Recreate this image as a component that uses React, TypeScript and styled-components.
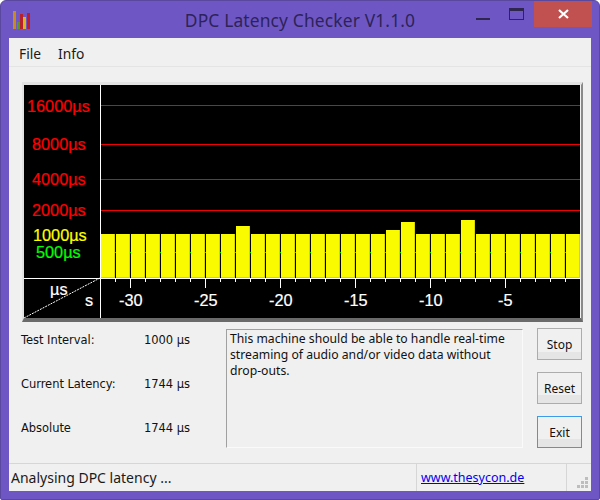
import React from 'react';
import styled, { createGlobalStyle } from 'styled-components';

const Global = createGlobalStyle`
  html, body { margin: 0; padding: 0; background: #fff; }
  #root { width: 600px; height: 500px; overflow: hidden; }
`;

const Win = styled.div`
  width: 600px; height: 500px; box-sizing: border-box;
  background: #6e57c4;
  border: 1px solid #5a489f;
  border-radius: 6px 6px 2px 2px;
  display: flex; flex-direction: column;
  padding: 0 8px 8px 8px;
`;
const TitleBar = styled.div`
  height: 37px; flex: none; position: relative;
  display: flex; align-items: center; justify-content: center;
`;
const Title = styled.div`
  font: 17.4px "Noto Sans", "Open Sans", sans-serif;
  color: #2d2358;
  letter-spacing: 0.15px;
`;
const AppIcon = styled.svg`
  position: absolute; left: 4px; top: 10px;
`;
const WinControls = styled.div`
  position: absolute; right: -1px; top: 0; display: flex; align-items: flex-start;
`;
const Ctl = styled.div<{ $w: number; $low?: boolean }>`
  width: ${p => p.$w}px; height: 26px; display: flex; justify-content: center;
  align-items: ${p => (p.$low ? 'flex-end' : 'center')};
  box-sizing: border-box; padding-bottom: ${p => (p.$low ? '7px' : '0')};
`;
const CloseBtn = styled(Ctl)`
  background: #c15151;
`;
const Client = styled.div`
  flex: 1; background: #f0f0f0; display: flex; flex-direction: column; min-height: 0;
`;
const MenuBar = styled.div`
  height: 29px; flex: none; box-sizing: border-box;
  border-bottom: 1px solid #e4e4e4;
  display: flex; align-items: center; gap: 17px; padding: 3px 0 0 10px;
  font: 13.8px "Noto Sans", "Open Sans", sans-serif; color: #1a1a1a;
`;
const ChartFrame = styled.div`
  margin: 15px 8px 0 13px; height: 240px; box-sizing: border-box;
  border-style: solid; border-width: 3px 2px 4px 2px;
  border-color: #e3e3e3 #8a8a8a #6a6a6a #e3e3e3;
  flex: none;
`;
const ChartSvg = styled.svg`
  display: block; width: 556px; height: 233px;
`;
const Lower = styled.div`
  flex: 1; display: flex; min-height: 0; padding: 7px 9px 0 12px;
`;
const Stats = styled.div`
  width: 205px; flex: none; display: flex; flex-direction: column; gap: 30px; padding-top: 4px;
`;
const StatRow = styled.div`
  display: grid; grid-template-columns: 123px 1fr; height: 14px; line-height: 14px;
  font: 11.5px "DejaVu Sans", sans-serif; color: #111;
  letter-spacing: -0.05px;
`;
const Message = styled.div`
  width: 297px; height: 119px; flex: none; box-sizing: border-box;
  border-style: solid; border-width: 1px; border-color: #a0a0a0 #fafafa #fafafa #a0a0a0;
  padding: 1px 3px;
  font: 12.2px/16px "Noto Sans", "Open Sans", sans-serif; color: #111;
`;
const Buttons = styled.div`
  margin-left: auto; display: flex; flex-direction: column; gap: 12px; margin-top: -1px;
`;
const Btn = styled.div<{ $focus?: boolean }>`
  width: 45px; height: 32px; box-sizing: border-box;
  border: 1px solid ${p => (p.$focus ? '#3c9ce8' : '#acacac')};
  background: linear-gradient(#f0f0f0 0, #f0f0f0 75%, #e5e5e5 75%);
  display: flex; align-items: center; justify-content: center;
  font: 12px "Noto Sans", "Open Sans", sans-serif; color: #111;
`;
const Status = styled.div`
  height: 28px; flex: none; box-sizing: border-box; border-top: 1px solid #d6d6d6;
  display: flex; align-items: center; position: relative;
  font: 14px "Noto Sans", "Open Sans", sans-serif; color: #1a1a1a;
`;
const StatusMain = styled.div`
  width: 408px; height: 100%; flex: none; box-sizing: border-box; padding-left: 2px;
  border-right: 1px solid #d6d6d6; display: flex; align-items: center;
`;
const StatusLink = styled.a`
  width: 150px; height: 100%; flex: none; box-sizing: border-box; padding-left: 4px;
  border-right: 1px solid #d6d6d6;
  display: flex; align-items: center; color: #0000ee; text-decoration: underline;
  font-size: 12.5px;
`;
const Grip = styled.svg`
  position: absolute; right: 2px; bottom: 2px;
`;

const tall: Record<number, number> = { 9: 226, 19: 230, 20: 222, 24: 220 };
const bars = Array.from({ length: 32 }, (_, i) => ({ top: tall[i] ?? 234 }));
const OX = 24, OY = 85;

const Label = ({ x, y, c, t, s = 16.3 }: { x: number; y: number; c: string; t: string; s?: number }) => (
  <text x={x - OX} y={y - OY} fill={c} stroke={c} strokeWidth="0.2" fontSize={s} fontFamily='"Liberation Sans", sans-serif'>{t}</text>
);

const Chart = () => (
  <ChartSvg viewBox="0 0 556 233" shapeRendering="crispEdges">
    <rect width="556" height="233" fill="#000" />
    {[105, 144, 179, 210].map(y => (
      <rect key={y} x="76" y={y - OY} width="480" height="1" fill="#f00000" />
    ))}
    {bars.map((b, i) => {
      const x = 101 + i * 15 - OX;
      const w = 14;
      return (
        <g key={i}>
          <rect x={x} y={b.top - OY} width={w} height={278 - b.top} fill="#fbfb00" />
          <rect x={x + w - 1} y={b.top - OY} width="1" height={278 - b.top} fill="#d8d800" />
          <rect x={x} y={277 - OY} width={w} height="1" fill="#d8d800" />
          <rect x={x + w} y={252 - OY} width="1" height="1" fill="#00e000" />
        </g>
      );
    })}
    <rect x="0" y={278 - OY} width="556" height="1" fill="#fff" />
    <rect x="76" y="0" width="1" height="233" fill="#fff" />
    {Array.from({ length: 32 }, (_, i) => {
      const x = 115 + i * 15 - OX;
      const long = (115 + i * 15 - 130) % 75 === 0;
      return <rect key={i} x={x} y={278 - OY} width="1" height={long ? 10 : 4} fill="#fff" />;
    })}
    <line x1="0" y1="233" x2="76" y2="193" stroke="#fff" strokeDasharray="2 1" shapeRendering="auto" />
    <Label x={27} y={112} c="#ff0000" t="16000µs" />
    <Label x={32} y={150} c="#ff0000" t="8000µs" />
    <Label x={32} y={185} c="#ff0000" t="4000µs" />
    <Label x={32} y={216} c="#ff0000" t="2000µs" />
    <Label x={33} y={241} c="#ffff00" t="1000µs" />
    <Label x={36} y={258} c="#00ff00" t="500µs" />
    <Label x={50} y={295} c="#fff" t="µs" />
    <Label x={85} y={306} c="#fff" t="s" />
    <Label x={119} y={306} c="#fff" t="-30" />
    <Label x={194} y={306} c="#fff" t="-25" />
    <Label x={269} y={306} c="#fff" t="-20" />
    <Label x={344} y={306} c="#fff" t="-15" />
    <Label x={419} y={306} c="#fff" t="-10" />
    <Label x={498} y={306} c="#fff" t="-5" />
  </ChartSvg>
);

export default function App() {
  return (
    <>
      <Global />
      <Win>
        <TitleBar>
          <AppIcon width="18" height="20" viewBox="0 0 18 20">
            <rect x="0" y="0" width="3" height="18" fill="#c98a1e" />
            <rect x="4" y="11" width="3" height="7" fill="#4f9a2a" />
            <rect x="7" y="3" width="3" height="15" fill="#b8202a" />
            <rect x="10" y="6" width="3" height="12" fill="#d8b820" />
            <rect x="14" y="2" width="3" height="16" fill="#c01c28" />
          </AppIcon>
          <Title>DPC Latency Checker V1.1.0</Title>
          <WinControls>
            <Ctl $w={46} $low>
              <svg width="14" height="2"><rect width="14" height="2" fill="#2f2650" /></svg>
            </Ctl>
            <Ctl $w={21}>
              <svg width="15" height="12"><rect x=".5" y=".5" width="14" height="11" fill="none" stroke="#2f2650" /><rect width="15" height="3" fill="#2f2650" /></svg>
            </Ctl>
            <Ctl $w={7} />
            <CloseBtn $w={58}>
              <svg width="11" height="10"><path d="M1 1 L10 9 M10 1 L1 9" stroke="#fff" strokeWidth="2.2" /></svg>
            </CloseBtn>
          </WinControls>
        </TitleBar>
        <Client>
          <MenuBar><span>File</span><span>Info</span></MenuBar>
          <ChartFrame><Chart /></ChartFrame>
          <Lower>
            <Stats>
              <StatRow><span>Test Interval:</span><span>1000 µs</span></StatRow>
              <StatRow><span>Current Latency:</span><span>1744 µs</span></StatRow>
              <StatRow><span>Absolute</span><span>1744 µs</span></StatRow>
            </Stats>
            <Message>This machine should be able to handle real-time streaming of audio and/or video data without drop-outs.</Message>
            <Buttons>
              <Btn>Stop</Btn>
              <Btn>Reset</Btn>
              <Btn $focus>Exit</Btn>
            </Buttons>
          </Lower>
          <Status>
            <StatusMain>Analysing DPC latency ...</StatusMain>
            <StatusLink href="#">www.thesycon.de</StatusLink>
            <Grip width="12" height="12" viewBox="0 0 12 12">
              {[[8, 0], [4, 4], [8, 4], [0, 8], [4, 8], [8, 8]].map(([x, y]) => (
                <rect key={`${x}-${y}`} x={x} y={y} width="3" height="3" fill="#bdbdbd" />
              ))}
            </Grip>
          </Status>
        </Client>
      </Win>
    </>
  );
}
